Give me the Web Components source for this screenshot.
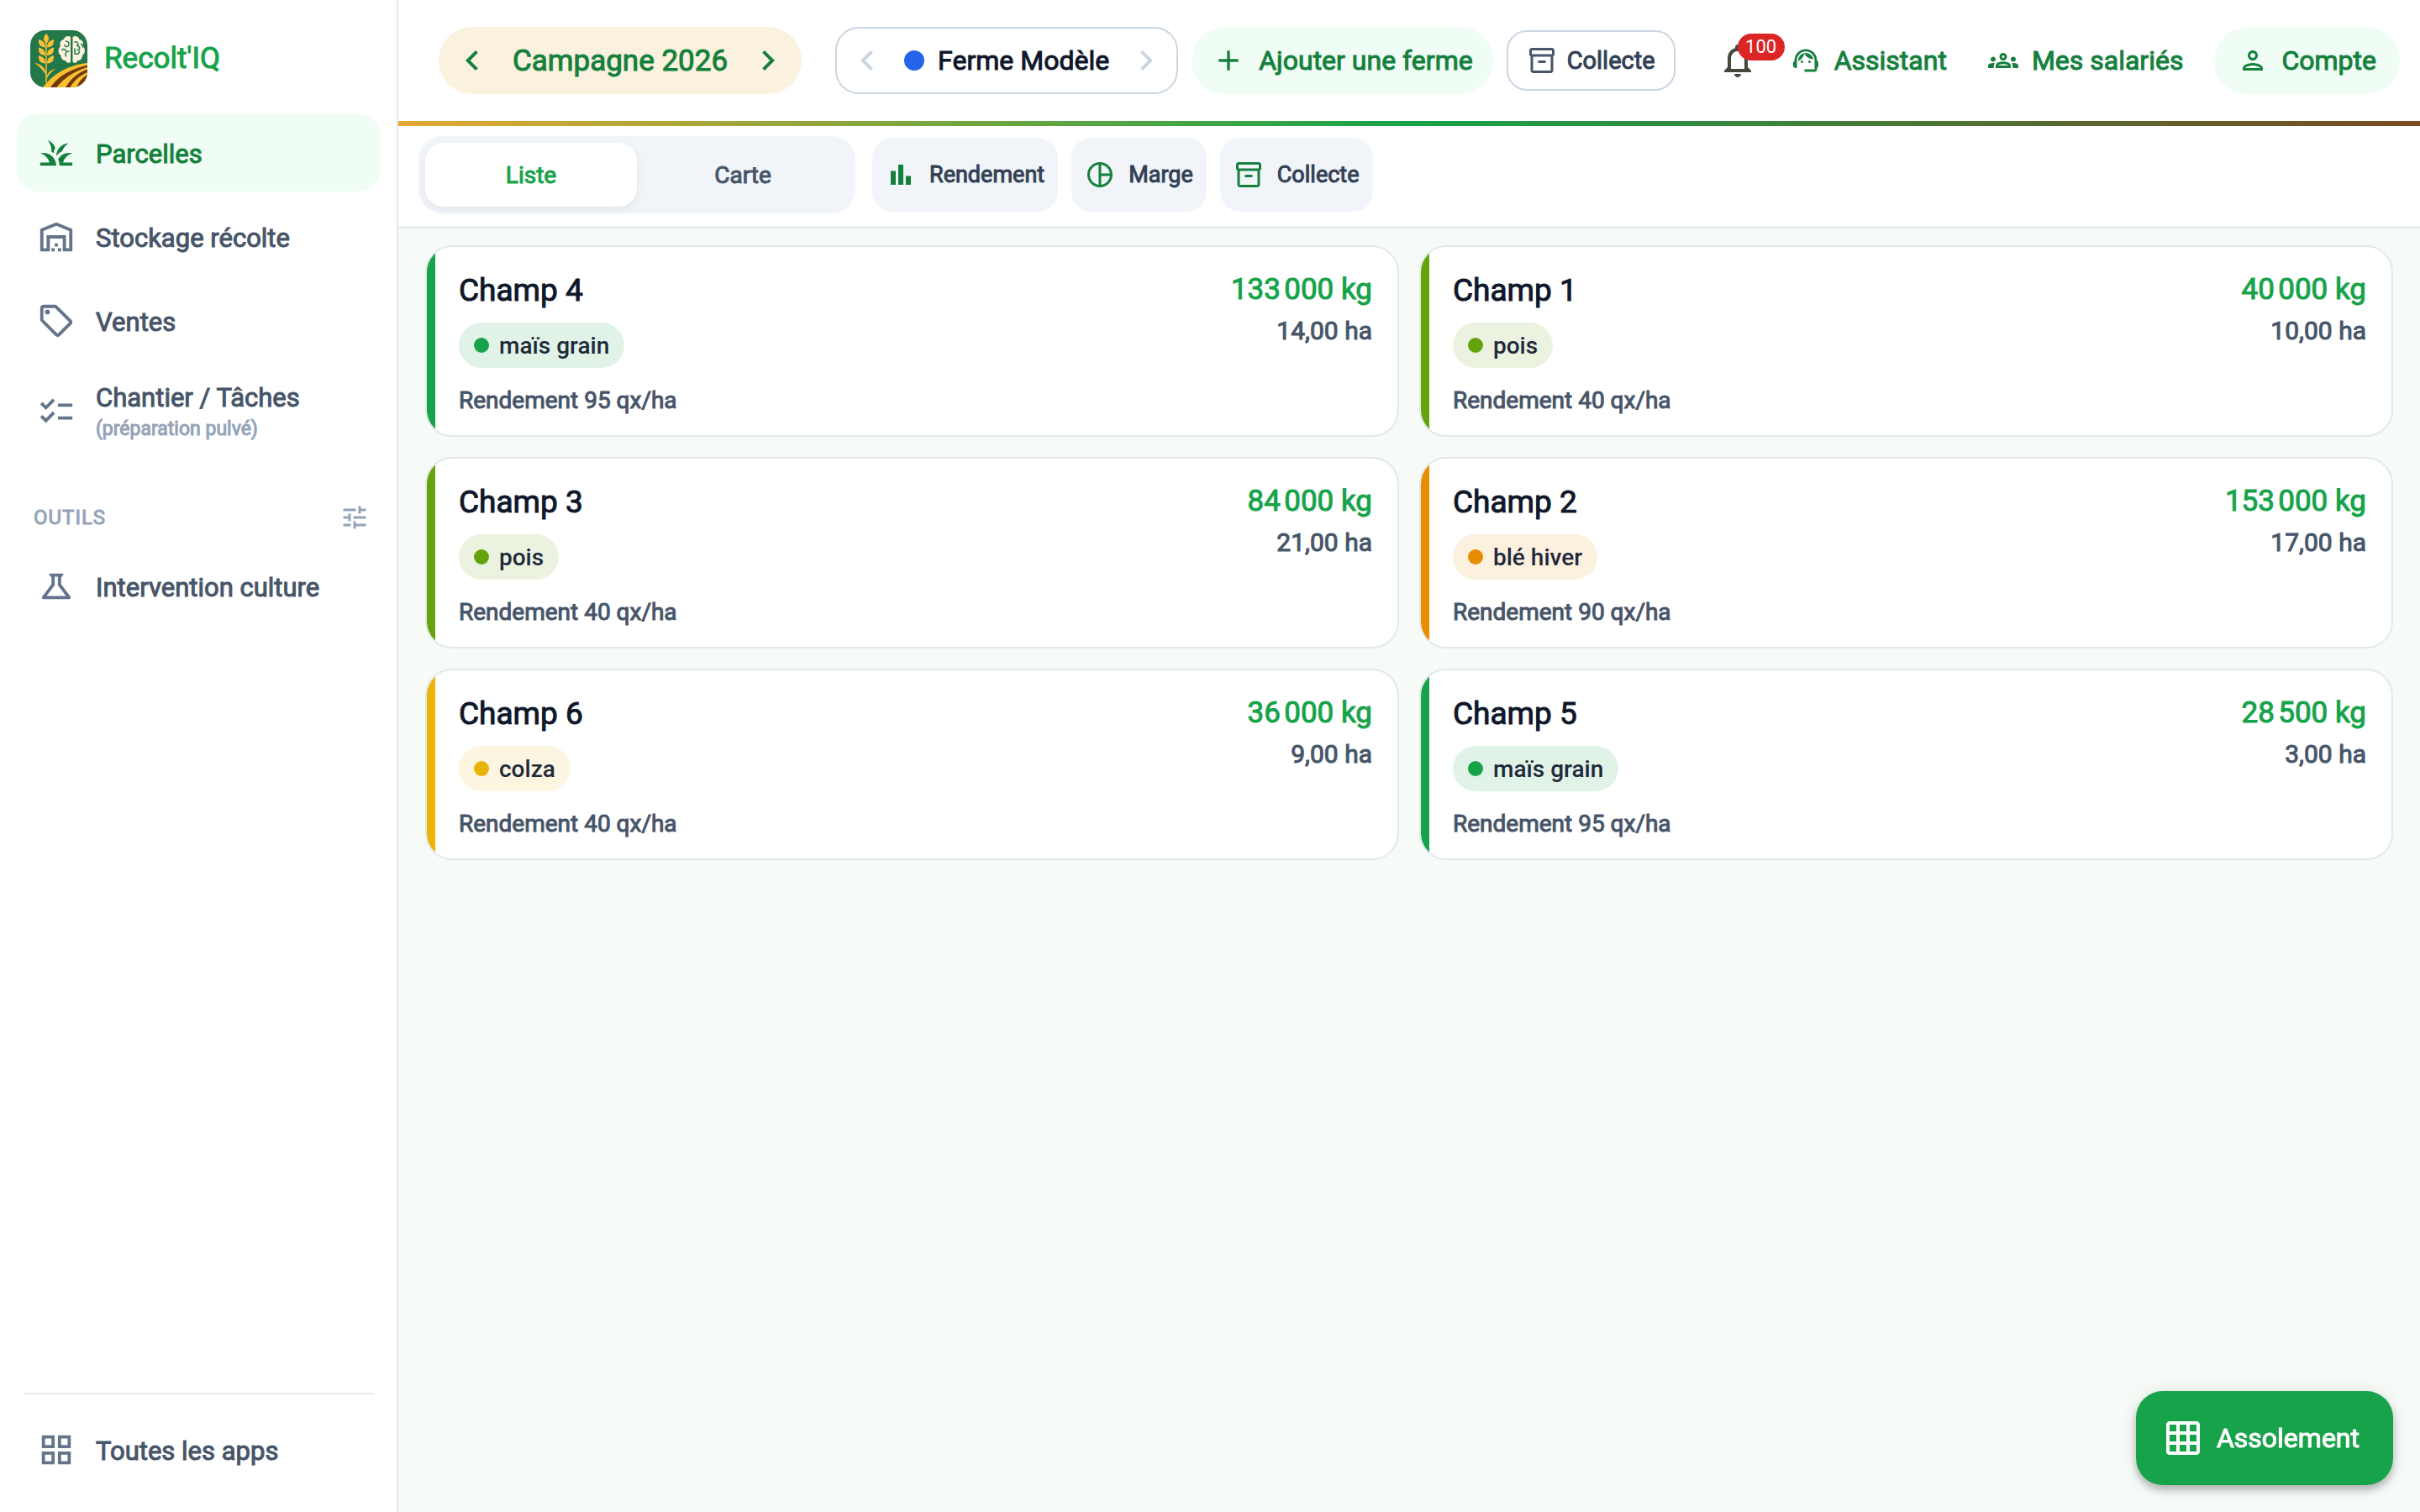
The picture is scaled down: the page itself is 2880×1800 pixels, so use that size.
<!DOCTYPE html>
<html lang="fr">
<head>
<meta charset="utf-8">
<meta name="viewport" content="width=device-width, initial-scale=1">
<title>Recolt'IQ – Parcelles</title>
<style>
  :root {
    --green-600: #16a34a;
    --green-700: #15803d;
    --green-50: #f0fdf4;
    --slate-900: #0f172a;
    --slate-700: #334155;
    --slate-600: #475569;
    --slate-500: #64748b;
    --slate-400: #94a3b8;
    --slate-300: #cbd5e1;
    --slate-200: #e2e8f0;
    --slate-100: #f1f5f9;
  }
  body { margin: 0; font-family: Roboto, sans-serif; font-size: 28px; color: var(--slate-900); background: #f6fbf7; }
</style>
</head>
<body>
<farm-app></farm-app>

<script>
const ICONS = {
  grass: '<path d="M12,20H2v-2h5.75C7.02,15.19,4.81,12.99,2,12.26C2.64,12.1,3.31,12,4,12C8.42,12,12,15.58,12,20z M22,12.26C21.36,12.1,20.69,12,20,12c-2.93,0-5.48,1.58-6.88,3.93c0.29,0.66,0.53,1.35,0.67,2.07c0.13,0.65,0.2,1.32,0.2,2h2h6v-2h-5.75C16.98,15.19,19.19,12.99,22,12.26z M15.64,11.02c0.78-2.09,2.23-3.84,4.09-5C15.44,6.16,12,9.67,12,14c0,0.01,0,0.02,0,0.02C12.95,12.75,14.2,11.72,15.64,11.02z M11.42,8.85C10.58,6.66,8.88,4.89,6.7,4C8.14,5.86,9,8.18,9,10.71c0,0.21-0.03,0.41-0.04,0.61c0.43,0.24,0.83,0.52,1.22,0.82C10.39,10.96,10.83,9.85,11.42,8.85z"/>',
  warehouse: '<path d="M20,8.35V19h-2v-8H6v8H4V8.35l8-3.2L20,8.35z M22,21V7L12,3L2,7v14h6v-8h8v8H22z M11,19H9v2h2V19z M13,16h-2v2h2V16z M15,19h-2v2h2V19z"/>',
  sell: '<path d="M21.41,11.41l-8.83-8.83C12.21,2.21,11.7,2,11.17,2H4C2.9,2,2,2.9,2,4v7.17c0,0.53,0.21,1.04,0.59,1.41l8.83,8.83c0.78,0.78,2.05,0.78,2.83,0l7.17-7.17C22.2,13.46,22.2,12.2,21.41,11.41z M12.83,20L4,11.17V4h7.17L20,12.83L12.83,20z"/><circle cx="6.5" cy="6.5" r="1.5"/>',
  checklist: '<path d="M22,7h-9v2h9V7z M22,15h-9v2h9V15z M5.54,11L2,7.46l1.41-1.41l2.12,2.12l4.24-4.24l1.41,1.41L5.54,11z M5.54,19L2,15.46l1.41-1.41l2.12,2.12l4.24-4.24l1.41,1.41L5.54,19z"/>',
  tune: '<path d="M3 17v2h6v-2H3zM3 5v2h10V5H3zm10 16v-2h8v-2h-8v-2h-2v6h2zM7 9v2H3v2h4v2h2V9H7zm14 4v-2H11v2h10zm-6-4h2V7h4V5h-4V3h-2v6z"/>',
  science: '<path fill-rule="evenodd" d="M15.96,4H8.04C7.62,4,7.39,4.48,7.65,4.81L9,6.5v4.17L3.2,18.4C2.71,19.06,3.18,20,4,20h16c0.82,0,1.29-0.94,0.8-1.6L15,10.67V6.5l1.35-1.69C16.61,4.48,16.38,4,15.96,4z M13,11.33L18,18H6l5-6.67V6h2V11.33z"/>',
  apps: '<path d="M3 3v8h8V3H3zm6 6H5V5h4v4zm-6 4v8h8v-8H3zm6 6H5v-4h4v4zm4-16v8h8V3h-8zm6 6h-4V5h4v4zm-6 4v8h8v-8h-8zm6 6h-4v-4h4v4z"/>',
  left: '<path d="M15.41 7.41 14 6l-6 6 6 6 1.41-1.41L10.83 12z"/>',
  right: '<path d="M10 6 8.59 7.41 13.17 12l-4.58 4.59L10 18l6-6z"/>',
  add: '<path d="M19 13h-6v6h-2v-6H5v-2h6V5h2v6h6z"/>',
  box: '<path d="M20,2H4C3,2,2,2.9,2,4v3.01C2,7.73,2.43,8.35,3,8.7V20c0,1.1,1.1,2,2,2h14c0.9,0,2-0.9,2-2V8.7c0.57-0.35,1-0.97,1-1.69V4C22,2.9,21,2,20,2z M19,20H5V9h14V20z M20,7H4V4h16V7z"/><path d="M9 12h6v2H9z"/>',
  bell: '<path d="M12 22c1.1 0 2-.9 2-2h-4c0 1.1.9 2 2 2zm6-6v-5c0-3.07-1.63-5.64-4.5-6.32V4c0-.83-.67-1.5-1.5-1.5s-1.5.67-1.5 1.5v.68C7.64 5.36 6 7.92 6 11v5l-2 2v1h16v-1l-2-2zm-2 1H8v-6c0-2.48 1.51-4.5 4-4.5s4 2.02 4 4.5v6z"/>',
  agent: '<path d="M21 12.22C21 6.73 16.74 3 12 3c-4.69 0-9 3.65-9 9.28-.6.34-1 .98-1 1.72v2c0 1.1.9 2 2 2h1v-6.1c0-3.87 3.13-7 7-7s7 3.13 7 7V19h-8v2h8c1.1 0 2-.9 2-2v-1.22c.59-.31 1-.92 1-1.64v-2.3c0-.7-.41-1.31-1-1.62z"/><circle cx="9" cy="13" r="1"/><circle cx="15" cy="13" r="1"/><path d="M18 11.03C17.52 8.18 15.04 6 12.05 6c-3.03 0-6.29 2.51-6.03 6.45 2.47-1.01 4.33-3.21 4.86-5.89 1.31 2.63 4 4.44 7.12 4.47z"/>',
  groups: '<path d="M4,13c1.1,0,2-0.9,2-2c0-1.1-0.9-2-2-2s-2,0.9-2,2C2,12.1,2.9,13,4,13z M5.13,14.1C4.76,14.04,4.39,14,4,14c-0.99,0-1.93,0.21-2.78,0.58C0.48,14.9,0,15.62,0,16.43V18l4.5,0v-1.61C4.5,15.56,4.73,14.78,5.13,14.1z M20,13c1.1,0,2-0.9,2-2c0-1.1-0.9-2-2-2s-2,0.9-2,2C18,12.1,18.9,13,20,13z M24,16.43c0-0.81-0.48-1.53-1.22-1.85C21.93,14.21,20.99,14,20,14c-0.39,0-0.76,0.04-1.13,0.1c0.4,0.68,0.63,1.46,0.63,2.29V18l4.5,0V16.43z"/><path fill-rule="evenodd" d="M16.24,13.65c-1.17-0.52-2.61-0.9-4.24-0.9c-1.63,0-3.07,0.39-4.24,0.9C6.68,14.13,6,15.21,6,16.39V18h12v-1.61C18,15.21,17.32,14.13,16.24,13.65z M8.07,16c0.09-0.23,0.13-0.39,0.91-0.69c0.97-0.38,1.99-0.56,3.02-0.56s2.05,0.18,3.02,0.56c0.77,0.3,0.81,0.46,0.91,0.69H8.07z M12,8c0.55,0,1,0.45,1,1s-0.45,1-1,1s-1-0.45-1-1S11.45,8,12,8z M12,6c-1.66,0-3,1.34-3,3c0,1.66,1.34,3,3,3s3-1.34,3-3C15,7.34,13.66,6,12,6z"/>',
  person: '<path fill-rule="evenodd" d="M12 6c1.1 0 2 .9 2 2s-.9 2-2 2-2-.9-2-2 .9-2 2-2zm0 10c2.7 0 5.8 1.29 6 2H6c.23-.72 3.31-2 6-2zm0-12C9.79 4 8 5.79 8 8s1.79 4 4 4 4-1.79 4-4-1.79-4-4-4zm0 10c-2.67 0-8 1.34-8 4v2h16v-2c0-2.66-5.33-4-8-4z"/>',
  bars: '<path d="M4 9h4v11H4zM16 13h4v7h-4zM10 4h4v16h-4z"/>',
  pie: '<path d="M12 2C6.48 2 2 6.48 2 12s4.48 10 10 10 10-4.48 10-10S17.52 2 12 2zm1 2.07c3.61.45 6.48 3.33 6.93 6.93H13V4.07zM4 12c0-4.06 3.07-7.44 7-7.93v15.87c-3.93-.5-7-3.88-7-7.94zm9 7.93V13h6.93c-.45 3.61-3.32 6.48-6.93 6.93z"/>',
  grid: '<path d="M20 2H4c-1.1 0-2 .9-2 2v16c0 1.1.9 2 2 2h16c1.1 0 2-.9 2-2V4c0-1.1-.9-2-2-2zM8 20H4v-4h4v4zm0-6H4v-4h4v4zm0-6H4V4h4v4zm6 12h-4v-4h4v4zm0-6h-4v-4h4v4zm0-6h-4V4h4v4zm6 12h-4v-4h4v4zm0-6h-4v-4h4v4zm0-6h-4V4h4v4z"/>'
};

const BASE = `
  *, *::before { box-sizing: border-box; }
  button { font: inherit; color: inherit; margin: 0; padding: 0; border: 0; background: none; cursor: pointer; -webkit-text-stroke: inherit; }
  a { color: inherit; text-decoration: none; }
`;

function define(name, render) {
  customElements.define(name, class extends HTMLElement {
    constructor() { super(); this.attachShadow({ mode: 'open' }); }
    connectedCallback() {
      const template = document.createElement('template');
      template.innerHTML = render(this);
      this.shadowRoot.replaceChildren(template.content.cloneNode(true));
    }
  });
}

/* Single-colour 24-unit glyph, sized by --size */
define('m-icon', el => `
  <style>
    :host { display: block; flex: none; width: var(--size, 36px); height: var(--size, 36px); }
    svg { display: block; width: 100%; height: 100%; fill: currentColor; }
  </style>
  <svg viewBox="0 0 24 24" aria-hidden="true">${ICONS[el.getAttribute('name')]}</svg>`);

/* Wheat, brain and ploughed field */
define('brand-logo', () => `
  <style>
    :host { display: block; flex: none; width: 68px; height: 68px; border-radius: 18px; overflow: hidden; }
    svg { display: block; }
  </style>
  <svg viewBox="0 0 68 68" width="68" height="68" role="img" aria-label="Logo">
    <rect width="68" height="68" fill="#23784a"/>
    <path d="M15 68C27 52 46 41 68 39V68Z" fill="#fcc02f"/>
    <g fill="#6f3a0e">
      <path d="M24 68C33 55 48 46 68 41.500V44C52 49 40 57 31.500 68Z"/>
      <path d="M42 68C48 58 56 51 68 46.500V50C59 54 52 60 47.500 68Z"/>
      <path d="M55 68C58 61 62 56.500 68 53V68Z"/>
    </g>
    <g fill="none" stroke="#f6bd37" stroke-linecap="round">
      <path d="M19 12V62" stroke-width="1.500"/>
    </g>
    <g fill="#f9bf35">
      <path d="M19 4C23 8 23 12 19 16C15 12 15 8 19 4Z"/>
      <path d="M10 11C15 12 18 15 18 20.500C12 20.500 9.500 17 10 11Z"/>
      <path d="M28 11C23 12 20 15 20 20.500C26 20.500 28.500 17 28 11Z"/>
      <path d="M10 20.500C15 21.500 18 24.500 18 30C12 30 9.500 26.500 10 20.500Z"/>
      <path d="M28 20.500C23 21.500 20 24.500 20 30C26 30 28.500 26.500 28 20.500Z"/>
      <path d="M10 30C15 31 18 34 18 39.500C12 39.500 9.500 36 10 30Z"/>
      <path d="M28 30C23 31 20 34 20 39.500C26 39.500 28.500 36 28 30Z"/>
      <path d="M5 39C13 40 18.500 45 19 54C15 47 11 43 5 39Z"/>
      <path d="M30.500 46C24 46.500 19.500 51 18.500 60C22 53 25 49 30.500 46Z"/>
    </g>
    <g fill="#fdf3dc">
      <path d="M48 8C45 6 40.500 7.500 40 11C36 11.500 34.500 16 36 19C32.500 22 33 28 36.500 30C36.500 34 39.500 36.500 42 36C43.500 39.500 47 39.500 48 37.500Z"/>
      <path d="M50.500 8C53.500 6 58 7.500 58.500 11C62.500 11.500 64 16 62.500 19C66 22 65.500 28 62 30C62 34 59 36.500 56.500 36C55 39.500 51.500 39.500 50.500 37.500Z"/>
    </g>
    <g fill="none" stroke="#23784a" stroke-width="1.500" stroke-linecap="round">
      <path d="M42.500 13C46 13 47 16.500 45 19C43 20.500 41 19 41 17.500"/>
      <path d="M37.500 23.500C39 21.500 42 22.500 42.500 24.500"/>
      <path d="M46 25C42.500 25 41 28 42.500 31"/>
      <path d="M53 14C56 13 58 16 56 18.500C60 19.500 59 24 56 23.500"/>
      <path d="M53 22V28C56 29 58.500 27.500 58.500 25"/>
      <path d="M60.500 16.500C62 17 63 18.500 62.500 20"/>
    </g>
  </svg>`);

define('nav-item', el => `
  <style>${BASE}
    :host { display: block; color: var(--slate-600); --size: 46px; }
    :host([active]) { color: var(--green-700); }
    a { display: flex; align-items: center; gap: 24px; min-height: 92px; padding: 8px 24px; border-radius: 24px; font-size: 31px; line-height: 38px; -webkit-text-stroke: 1px; }
    :host([active]) a { background: var(--green-50); }
    :host([sub]) a { min-height: 108px; }
    m-icon { color: var(--slate-500); }
    :host([active]) m-icon { color: inherit; }
    span { padding-top: 4px; }
    small { display: block; font-size: 23px; line-height: 36px; color: var(--slate-400); }
  </style>
  <a href="#" ${el.hasAttribute('active') ? 'aria-current="page"' : ''}>
    <m-icon name="${el.getAttribute('icon')}"></m-icon>
    <span><slot></slot>${el.hasAttribute('sub') ? `<small>${el.getAttribute('sub')}</small>` : ''}</span>
  </a>`);

define('side-bar', () => `
  <style>${BASE}
    :host { display: flex; flex-direction: column; padding: 36px 20px 28px; background: #fff; border-right: 2px solid var(--slate-200); }
    .brand { display: flex; align-items: center; gap: 20px; padding-left: 16px; margin-bottom: 32px; font-size: 35px; line-height: 42px; color: var(--green-600); -webkit-text-stroke: 1px; }
    nav { display: flex; flex-direction: column; gap: 8px; }
    .tools { display: flex; align-items: center; justify-content: space-between; height: 72px; margin-top: 36px; padding: 0 12px 0 20px; color: var(--slate-400); }
    h2 { margin: 0; font-size: 24px; line-height: 32px; font-weight: 400; letter-spacing: 1px; -webkit-text-stroke: 1px; }
    hr { width: auto; margin: auto 8px 20px; border: 0; border-top: 2px solid var(--slate-200); }
  </style>
  <div class="brand"><brand-logo></brand-logo><span>Recolt'IQ</span></div>
  <nav aria-label="Principal">
    <nav-item icon="grass" active>Parcelles</nav-item>
    <nav-item icon="warehouse">Stockage récolte</nav-item>
    <nav-item icon="sell">Ventes</nav-item>
    <nav-item icon="checklist" sub="(préparation pulvé)">Chantier / Tâches</nav-item>
  </nav>
  <div class="tools"><h2>OUTILS</h2><button type="button" aria-label="Personnaliser"><m-icon name="tune"></m-icon></button></div>
  <nav-item icon="science">Intervention culture</nav-item>
  <hr>
  <nav-item icon="apps">Toutes les apps</nav-item>`);

/* Previous / label / next control */
define('value-stepper', el => `
  <style>${BASE}
    :host { display: flex; align-items: center; height: 80px; --size: 48px; }
    :host([kind="season"]) { gap: 24px; padding: 0 16px; border-radius: 40px; background: #faf2de; color: var(--green-700); font-size: 35px; -webkit-text-stroke: 1px; }
    :host([kind="farm"]) { gap: 20px; padding: 0 12px; border: 2px solid var(--slate-300); border-radius: 28px; background: #fff; font-size: 32px; -webkit-text-stroke: 1px; box-sizing: border-box; }
    :host([kind="farm"]) button { color: var(--slate-300); }
    .label { display: flex; align-items: center; gap: 16px; white-space: nowrap; }
    :host([kind="farm"]) .label::before { content: ""; width: 24px; height: 24px; border-radius: 50%; background: #2563eb; }
  </style>
  <button type="button" aria-label="Précédent"><m-icon name="left"></m-icon></button>
  <span class="label"><slot></slot></span>
  <button type="button" aria-label="Suivant"><m-icon name="right"></m-icon></button>`);

define('action-button', el => `
  <style>${BASE}
    :host { display: block; }
    button { display: flex; align-items: center; gap: 16px; height: 80px; padding: 0 24px; border-radius: 40px; font-size: 32px; color: var(--green-700); white-space: nowrap; -webkit-text-stroke: 1px; }
    :host([kind="tonal"]) button { background: var(--green-50); }
    :host([kind="account"]) button { background: var(--green-50); padding: 0 28px; }
    :host([kind="outline"]) button { height: 72px; gap: 12px; padding: 0 22px; border: 2px solid var(--slate-300); border-radius: 24px; background: #fff; font-size: 29px; color: var(--slate-700); }
    :host([kind="outline"]) m-icon { color: var(--slate-600); }
    :host([kind="chip"]) button { height: 88px; padding: 0 16px; border-radius: 24px; background: var(--slate-100); font-size: 27px; color: var(--slate-700); }
    :host([kind="chip"]) m-icon { color: var(--green-700); }
    :host([kind="fab"]) button { height: 112px; padding: 0 40px 0 32px; border-radius: 32px; background: var(--green-600); color: #fff; box-shadow: 0 6px 10px rgba(0,0,0,.24), 0 2px 20px rgba(0,0,0,.1); }
  </style>
  <button type="button"><m-icon name="${el.getAttribute('icon')}"></m-icon><span><slot></slot></span></button>`);

define('alert-bell', () => `
  <style>${BASE}
    :host { display: block; --size: 48px; color: #45483f; }
    button { position: relative; display: flex; align-items: center; justify-content: center; width: 76px; height: 80px; }
    .count { position: absolute; left: 38px; top: 8px; display: grid; place-items: center; width: 56px; height: 32px; border-radius: 16px; background: #dc2626; color: #fff; font-size: 22px; line-height: 32px; }
  </style>
  <button type="button" aria-label="Notifications"><m-icon name="bell"></m-icon><span class="count"><slot></slot></span></button>`);

define('top-bar', () => `
  <style>${BASE}
    :host { display: block; background: #fff; }
    header { display: flex; align-items: center; gap: 16px; height: 144px; padding: 0 24px 0 48px; }
    value-stepper[kind="season"] { margin-right: 24px; }
    .user { display: flex; align-items: center; gap: 1px; margin-left: auto; }
    action-button[kind="account"] { margin-left: 12px; }
    .rule { height: 6px; background: linear-gradient(90deg, #e5a832, #16a34a 50%, #7c4a21); }
  </style>
  <header>
    <value-stepper kind="season">Campagne 2026</value-stepper>
    <value-stepper kind="farm">Ferme Modèle</value-stepper>
    <action-button kind="tonal" icon="add" style="--size: 40px">Ajouter une ferme</action-button>
    <action-button kind="outline" icon="box">Collecte</action-button>
    <div class="user">
      <alert-bell>100</alert-bell>
      <action-button icon="agent">Assistant</action-button>
      <action-button icon="groups">Mes salariés</action-button>
      <action-button kind="account" icon="person">Compte</action-button>
    </div>
  </header>
  <div class="rule"></div>`);

define('view-bar', () => `
  <style>${BASE}
    :host { display: flex; align-items: center; gap: 16px; padding: 12px 24px 16px; background: #fff; border-bottom: 2px solid #e5e9ea; }
    .segments { display: grid; grid-template-columns: 252px 252px; margin-right: 4px; padding: 8px; border-radius: 28px; background: var(--slate-100); font-size: 28px; color: var(--slate-600); -webkit-text-stroke: 1px; }
    .segments button { height: 76px; border-radius: 22px; }
    .segments [aria-selected="true"] { background: #fff; color: var(--green-600); box-shadow: 0 4px 12px rgba(0,0,0,.06); }
  </style>
  <div class="segments" role="tablist">
    <button type="button" role="tab" aria-selected="true">Liste</button>
    <button type="button" role="tab" aria-selected="false">Carte</button>
  </div>
  <action-button kind="chip" icon="bars">Rendement</action-button>
  <action-button kind="chip" icon="pie">Marge</action-button>
  <action-button kind="chip" icon="box">Collecte</action-button>`);

define('field-card', el => `
  <style>${BASE}
    :host { display: block; }
    article { display: flex; border: 2px solid #e3e8ec; border-radius: 32px; overflow: hidden; background: #fff; }
    article::before { content: ""; flex: none; width: 10px; background: var(--crop); }
    .body { flex: 1; display: flex; justify-content: space-between; padding: 29px 30px 22px 28px; }
    h3 { margin: 0 0 15px; font-size: 37px; line-height: 46px; font-weight: 400; -webkit-text-stroke: 1px; }
    .crop { display: inline-flex; align-items: center; gap: 12px; height: 54px; padding: 0 18px; border-radius: 27px; background: color-mix(in srgb, var(--crop) 13%, #fff); color: #1e293b; font-size: 28px; font-weight: 500; }
    .crop::before { content: ""; width: 18px; height: 18px; border-radius: 50%; background: var(--crop); }
    p { margin: 20px 0 0; font-size: 28px; line-height: 38px; color: var(--slate-600); -webkit-text-stroke: 1px; }
    .totals { text-align: right; white-space: nowrap; }
    .weight { font-size: 35px; line-height: 44px; color: var(--green-600); -webkit-text-stroke: 1px; }
    .area { margin-top: 8px; font-size: 30px; line-height: 38px; color: var(--slate-600); -webkit-text-stroke: 1px; }
  </style>
  <article>
    <div class="body">
      <div>
        <h3><slot></slot></h3>
        <span class="crop">${el.getAttribute('crop')}</span>
        <p>Rendement ${el.getAttribute('yield')} qx/ha</p>
      </div>
      <div class="totals">
        <div class="weight">${el.getAttribute('weight')} kg</div>
        <div class="area">${el.getAttribute('area')} ha</div>
      </div>
    </div>
  </article>`);

define('field-list', () => `
  <style>
    :host { display: grid; grid-template-columns: 1fr 1fr; gap: 24px; padding: 20px 32px; }
  </style>
  <field-card style="--crop: #16a34a" crop="maïs grain" yield="95" weight="133&#8239;000" area="14,00">Champ 4</field-card>
  <field-card style="--crop: #65a30d" crop="pois" yield="40" weight="40&#8239;000" area="10,00">Champ 1</field-card>
  <field-card style="--crop: #65a30d" crop="pois" yield="40" weight="84&#8239;000" area="21,00">Champ 3</field-card>
  <field-card style="--crop: #ea8c00" crop="blé hiver" yield="90" weight="153&#8239;000" area="17,00">Champ 2</field-card>
  <field-card style="--crop: #eab308" crop="colza" yield="40" weight="36&#8239;000" area="9,00">Champ 6</field-card>
  <field-card style="--crop: #16a34a" crop="maïs grain" yield="95" weight="28&#8239;500" area="3,00">Champ 5</field-card>`);

define('farm-app', () => `
  <style>
    :host { display: grid; grid-template-columns: 474px 1fr; min-height: 100vh; }
    action-button { position: fixed; right: 32px; bottom: 32px; --size: 48px; }
  </style>
  <side-bar></side-bar>
  <main>
    <top-bar></top-bar>
    <view-bar></view-bar>
    <field-list></field-list>
  </main>
  <action-button kind="fab" icon="grid">Assolement</action-button>`);
</script>
</body>
</html>
